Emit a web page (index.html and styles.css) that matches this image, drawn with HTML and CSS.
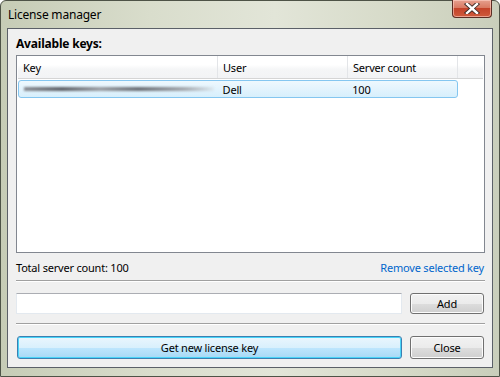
FILE: index.html
```html
<!DOCTYPE html>
<html lang="en">
<head>
    <meta charset="UTF-8">
    <title>License manager</title>
    <link rel="stylesheet" href="styles.css">
</head>
<body>
    <div class="window">
        <div class="titlebar">
            <span class="title">License manager</span>
            <button class="close-x" aria-label="Close">
                <svg width="16" height="11" viewBox="0 0 16 11">
                    <path d="M3 1 L13 10 M13 1 L3 10" stroke="#3b2a26" stroke-width="4.2" stroke-linecap="square"/>
                    <path d="M3 1 L13 10 M13 1 L3 10" stroke="#ffffff" stroke-width="2.4" stroke-linecap="square"/>
                </svg>
            </button>
        </div>
        <div class="client">
            <h1 class="caption">Available keys:</h1>
            <div class="list">
                <div class="list-head">
                    <div class="col col-key">Key</div>
                    <div class="col col-user">User</div>
                    <div class="col col-count">Server count</div>
                    <div class="col col-rest"></div>
                </div>
                <div class="list-row selected">
                    <div class="col col-key"><span class="smudge"></span></div>
                    <div class="col col-user">Dell</div>
                    <div class="col col-count">100</div>
                </div>
            </div>
            <div class="status">
                <span>Total server count: 100</span>
                <a href="#" class="link">Remove selected key</a>
            </div>
            <hr class="sep">
            <div class="add-row">
                <input type="text" class="key-input">
                <button class="btn">Add</button>
            </div>
            <hr class="sep">
            <div class="action-row">
                <button class="btn btn-wide focused">Get new license key</button>
                <button class="btn">Close</button>
            </div>
        </div>
    </div>
</body>
</html>
```

FILE: styles.css
```css
html, body {
    margin: 0;
    padding: 0;
}
body {
    width: 500px;
    height: 377px;
    overflow: hidden;
    font-family: 'Noto Sans', 'DejaVu Sans', sans-serif;
    font-size: 11px;
    letter-spacing: -0.2px;
    color: #000;
}
.window {
    box-sizing: border-box;
    width: 500px;
    height: 377px;
    border: 1px solid #4e5347;
    border-radius: 6px 6px 0 0;
    background: linear-gradient(90deg, #c6ccb6 0%, #d9ddcc 30%, #e2e5d8 55%, #d6dac8 80%, #c9cebb 100%);
    display: flex;
    flex-direction: column;
}
.titlebar {
    height: 27px;
    display: flex;
    align-items: flex-start;
    justify-content: space-between;
}
.title {
    margin: 5px 0 0 7px;
    font-size: 12px;
}
.close-x {
    width: 40px;
    height: 18px;
    margin: -1px 7px 0 0;
    padding: 0;
    border: 1px solid #5b2d24;
    border-top: none;
    border-radius: 0 0 4px 4px;
    background: linear-gradient(#e6a08f 0%, #d97a63 45%, #c4432a 50%, #cf5a3c 100%);
    box-shadow: inset 0 0 0 1px rgba(255, 210, 200, 0.6);
    display: flex;
    align-items: center;
    justify-content: center;
}
.client {
    flex: 1;
    margin: 0 6px 8px 6px;
    border: 1px solid #5b6068;
    background: #f0f0f0;
    padding: 6px 7px 0 8px;
    display: flex;
    flex-direction: column;
}
.caption {
    margin: 0;
    font-size: 12px;
    font-weight: bold;
    height: 20px;
}
.list {
    height: 196px;
    border: 1px solid #828790;
    background: #fff;
    padding: 0 1px;
}
.list-head {
    display: flex;
    height: 22px;
    background: linear-gradient(#ffffff 0%, #ffffff 40%, #f5f6f7 60%, #f2f3f5 100%);
    border-bottom: 1px solid #d5d5d5;
}
.list-head .col {
    border-right: 1px solid #e3e5e8;
    line-height: 24px;
}
.col {
    box-sizing: border-box;
    padding-left: 5px;
    font-size: 11px;
}
.col-key { width: 200px; }
.col-user { width: 130px; }
.col-count { width: 110px; }
.col-rest { flex: 1; border-right: none !important; }
.list-row {
    display: flex;
    height: 18px;
    margin-top: 1px;
    width: 440px;
    box-sizing: border-box;
    align-items: center;
}
.list-row.selected {
    border: 1px solid #84c6f0;
    border-radius: 3px;
    background: linear-gradient(#eef8fe, #d7effc);
}
.list-row .col-key { width: 199px; }
.smudge {
    display: block;
    width: 190px;
    height: 4px;
    background: linear-gradient(90deg, #8a8e95 0%, #5f636a 20%, #9ba0a6 40%, #6b7077 60%, #a6abb1 85%, rgba(210, 214, 218, 0.3) 100%);
    filter: blur(1px);
}
.status {
    display: flex;
    justify-content: space-between;
    align-items: center;
    height: 26px;
    padding-top: 1px;
}
.link {
    color: #0066cc;
    text-decoration: none;
    margin-right: 1px;
}
.sep {
    margin: 0;
    height: 0;
    border: none;
    border-top: 1px solid #a0a0a0;
    border-bottom: 1px solid #ffffff;
}
.add-row, .action-row {
    display: flex;
    justify-content: space-between;
    align-items: center;
    box-sizing: border-box;
}
.add-row {
    height: 41px;
    padding-top: 1px;
}
.action-row {
    height: 42px;
    padding-top: 2px;
}
.key-input {
    box-sizing: border-box;
    width: 386px;
    height: 21px;
    border: 1px solid #e3e9ef;
    border-top-color: #abadb3;
    background: #fff;
    margin: 0;
}
.btn {
    box-sizing: border-box;
    width: 74px;
    height: 21px;
    margin-right: 1px;
    font-family: inherit;
    font-size: 11px;
    letter-spacing: -0.2px;
    color: #000;
    border: 1px solid #707070;
    border-radius: 3px;
    background: linear-gradient(#f2f2f2 0%, #ebebeb 50%, #dddddd 51%, #cfcfcf 100%);
    box-shadow: inset 0 0 0 1px #fcfcfc;
    padding: 0;
}
.action-row .btn {
    height: 23px;
}
.btn-wide {
    width: 385px;
    margin-left: 1px;
}
.btn.focused {
    border-color: #3c7fb1;
    background: linear-gradient(#eaf6fd 0%, #d9f0fc 50%, #bee6fd 51%, #a7d9f5 100%);
    box-shadow: inset 0 0 0 1px #48d4f8;
}
```
